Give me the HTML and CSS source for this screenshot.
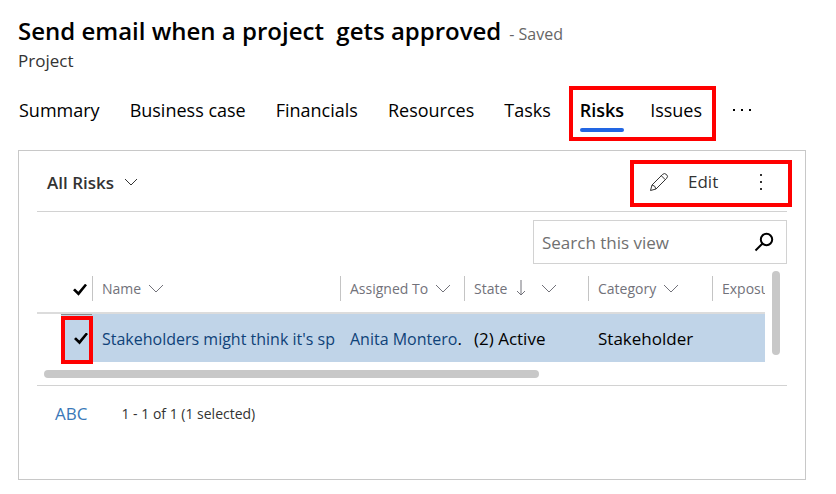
FILE: index.html
```
<!DOCTYPE html>
<html lang="en">
<head>
<meta charset="utf-8">
<meta name="viewport" content="width=device-width, initial-scale=1">
<title>Send email when a project gets approved</title>
<link rel="stylesheet" href="styles.css">
</head>
<body>
<header class="record">
  <div class="record-line">
    <h1 class="record-title">Send email when a project&nbsp; gets approved</h1>
    <span class="record-status">- Saved</span>
  </div>
  <p class="record-type">Project</p>
</header>

<nav class="tabs" aria-label="Form sections">
  <a class="tab" href="#summary">Summary</a>
  <a class="tab" href="#case">Business case</a>
  <a class="tab" href="#financials">Financials</a>
  <a class="tab" href="#resources">Resources</a>
  <a class="tab" href="#tasks">Tasks</a>
  <div class="tab-group callout">
    <a class="tab tab-active" href="#risks" aria-current="page">Risks</a>
    <a class="tab" href="#issues">Issues</a>
  </div>
  <button class="more" type="button" aria-label="More tabs">
    <svg width="20" height="4" viewBox="0 0 20 4"><path d="M1 1h2v2H1zM9 1h2v2H9zM17 1h2v2h-2z"/></svg>
  </button>
</nav>

<main class="panel">
  <div class="toolbar">
    <button class="view-picker" type="button">All Risks
      <svg class="chevron" width="14" height="9" viewBox="0 0 14 9"><path d="M1 1l6 6 6-6"/></svg>
    </button>
    <div class="commands callout">
      <button class="command" type="button">
        <svg class="pencil" width="20" height="20" viewBox="0 0 20 20"><path d="M1.500 18.500L3 13 13.700 2.300Q15.500.7 17.500 2.500T17.700 6.300L7 17zM3 13Q6.300 13.400 7 17M12.300 3.700L16.300 7.700"/></svg>
        Edit
      </button>
      <button class="overflow" type="button" aria-label="More commands">
        <svg width="4" height="18" viewBox="0 0 4 18"><path d="M1 1h2v2H1zM1 8h2v2H1zM1 15h2v2H1z"/></svg>
      </button>
    </div>
  </div>

  <form class="search">
    <input class="search-input" type="search" placeholder="Search this view" aria-label="Search this view">
    <button class="search-button" type="submit" aria-label="Search">
      <svg width="20" height="20" viewBox="0 0 20 20"><circle cx="12.500" cy="7.500" r="5.700"/><path d="M8.500 11.500L1.500 18.500"/></svg>
    </button>
  </form>

  <div class="grid-area">
    <table class="grid">
      <colgroup>
        <col class="col-check"><col><col class="col-mid"><col class="col-mid"><col class="col-mid"><col class="col-last">
      </colgroup>
      <thead>
        <tr>
          <th class="check-cell"><input class="tick" type="checkbox" checked aria-label="Select all rows"></th>
          <th><div class="head">Name <svg class="chevron" width="16" height="9" viewBox="0 0 16 9"><path d="M1 1l7 7 7-7"/></svg></div></th>
          <th><div class="head">Assigned To <svg class="chevron" width="16" height="9" viewBox="0 0 16 9"><path d="M1 1l7 7 7-7"/></svg></div></th>
          <th><div class="head">State <svg class="sort" width="10" height="16" viewBox="0 0 10 16"><path d="M5 0v15M1 11l4 4 4-4"/></svg><svg class="chevron" width="16" height="9" viewBox="0 0 16 9"><path d="M1 1l7 7 7-7"/></svg></div></th>
          <th><div class="head">Category <svg class="chevron" width="16" height="9" viewBox="0 0 16 9"><path d="M1 1l7 7 7-7"/></svg></div></th>
          <th><div class="head">Exposu</div></th>
        </tr>
      </thead>
      <tbody>
        <tr>
          <td class="check-cell"><div class="check-box callout"><input class="tick" type="checkbox" checked aria-label="Select row"></div></td>
          <td><a href="#risk">Stakeholders might think it's sp</a></td>
          <td><a href="#owner">Anita Montero</a>.</td>
          <td>(2) Active</td>
          <td>Stakeholder</td>
          <td></td>
        </tr>
      </tbody>
    </table>
    <div class="scroll-y"></div>
  </div>
  <div class="scroll-x"></div>

  <footer class="pager">
    <a class="jump" href="#abc">ABC</a>
    <span>1 - 1 of 1 (1 selected)</span>
  </footer>
</main>
</body>
</html>
```
FILE: styles.css
```
* { box-sizing: border-box; }

body {
  display: flex;
  flex-direction: column;
  min-height: 100vh;
  margin: 0;
  padding: 14px 30px 14px 18px;
  background: #fff;
  color: #000;
  font-family: "Open Sans", "Noto Sans", sans-serif;
  font-size: 17px;
}

a { color: inherit; text-decoration: none; }

button {
  padding: 0;
  border: 0;
  background: none;
  color: inherit;
  font: inherit;
}

svg { flex: none; fill: none; stroke: currentColor; }

/* Red frame around the parts that the reader should notice */
.callout { position: relative; }
.callout::after {
  content: "";
  position: absolute;
  inset: 0;
  border: 4px solid #f00;
  pointer-events: none;
}

.record-line { display: flex; align-items: baseline; gap: 8px; white-space: nowrap; }
.record-title { margin: 0; font-size: 24px; font-weight: 600; line-height: 34px; }
.record-status { color: #666; font-size: 16px; }
.record-type { margin: 0; color: #333; font-size: 17px; line-height: 26px; }

.tabs {
  display: flex;
  align-items: center;
  gap: 30px;
  height: 55px;
  margin: 12px 0 9px;
  padding-left: 1px;
  font-size: 18px;
  white-space: nowrap;
}
.tab { padding: 2px 0 10px; line-height: 24px; }
.tab-group {
  display: flex;
  align-items: center;
  gap: 26px;
  height: 55px;
  margin: 0 -14px 0 -12px;
  padding: 0 14px 0 11px;
}
.tab-active { position: relative; font-weight: 600; }
.tab-active::after {
  content: "";
  position: absolute;
  inset: auto 0 0;
  height: 4px;
  border-radius: 2px;
  background: #2266e3;
}
.more { display: flex; padding-bottom: 8px; }
.more svg, .overflow svg { fill: currentColor; stroke: none; }

.panel {
  flex: 1;
  padding: 9px 18px;
  border: 1px solid #c8c8c8;
}

.toolbar {
  display: flex;
  justify-content: space-between;
  height: 52px;
  padding-left: 10px;
  border-bottom: 1px solid #d2d2d2;
}
.view-picker {
  display: flex;
  align-items: center;
  gap: 10px;
  height: 44px;
  color: #333;
  font-weight: 600;
}
.commands {
  display: flex;
  align-items: center;
  justify-content: space-between;
  width: 162px;
  height: 47px;
  margin-right: -5px;
  padding: 0 29px 4px 19px;
  color: #333;
}
.command { display: flex; align-items: center; gap: 19px; }
.overflow { display: flex; }

.search {
  display: flex;
  align-items: center;
  width: 254px;
  height: 44px;
  margin: 8px 0 0 auto;
  padding: 0 12px 0 8px;
  border: 1px solid #d2d2d2;
}
.search-input {
  flex: 1;
  min-width: 0;
  padding: 0;
  border: 0;
  outline: 0;
  background: none;
  font: inherit;
}
.search-input::placeholder { color: #707070; opacity: 1; }
.search-button { display: flex; stroke-width: 2; }

.grid-area { display: flex; gap: 7px; padding-right: 7px; }
.grid {
  flex: 1;
  width: 0;
  table-layout: fixed;
  border-collapse: separate;
  border-spacing: 0;
}
.col-check { width: 55px; }
.col-mid { width: 124px; }
.col-last { width: 53px; }

th {
  height: 50px;
  padding: 0;
  border-bottom: 2px solid #dcdcdc;
  color: #72727a;
  font-size: 14px;
  font-weight: 400;
}
.head {
  display: flex;
  align-items: center;
  gap: 7px;
  height: 25px;
  padding-left: 9px;
  border-left: 1px solid #c4c4c4;
  overflow: hidden;
  white-space: nowrap;
}
.sort { margin: 0 8px 0 2px; }

td {
  height: 48px;
  padding: 0 0 0 10px;
  background: #c0d4e8;
  overflow: hidden;
  white-space: nowrap;
}
td a { color: #0f4278; font-size: 16px; }

.check-cell { padding: 0; text-align: right; }
th.check-cell { padding-right: 5px; }
td.check-cell { background: none; overflow: visible; }
.check-box {
  display: flex;
  align-items: center;
  justify-content: flex-end;
  width: 31px;
  height: 48px;
  margin-left: auto;
  padding-right: 4px;
  border-top: 1px solid #8c8c8c;
  background: #c0d4e8;
}
.check-box::after { inset: 1px -1px -2px 0; }
.tick {
  width: 14px;
  height: 12px;
  margin: 0;
  appearance: none;
  background: #000;
  clip-path: polygon(0 55%, 14% 40%, 38% 66%, 86% 0, 100% 13%, 40% 100%);
  vertical-align: middle;
}

.scroll-y {
  width: 8px;
  height: 84px;
  margin-top: 7px;
  border-radius: 4px;
  background: #c8c8c8;
}
.scroll-x {
  width: 66%;
  height: 8px;
  margin: 8px 0 7px 7px;
  border-radius: 4px;
  background: #c8c8c8;
}

.pager {
  display: flex;
  align-items: center;
  gap: 34px;
  height: 56px;
  padding-left: 18px;
  border-top: 1px solid #d2d2d2;
  color: #333;
  font-size: 14px;
}
.jump { color: #3a78b8; font-size: 17px; }
```
